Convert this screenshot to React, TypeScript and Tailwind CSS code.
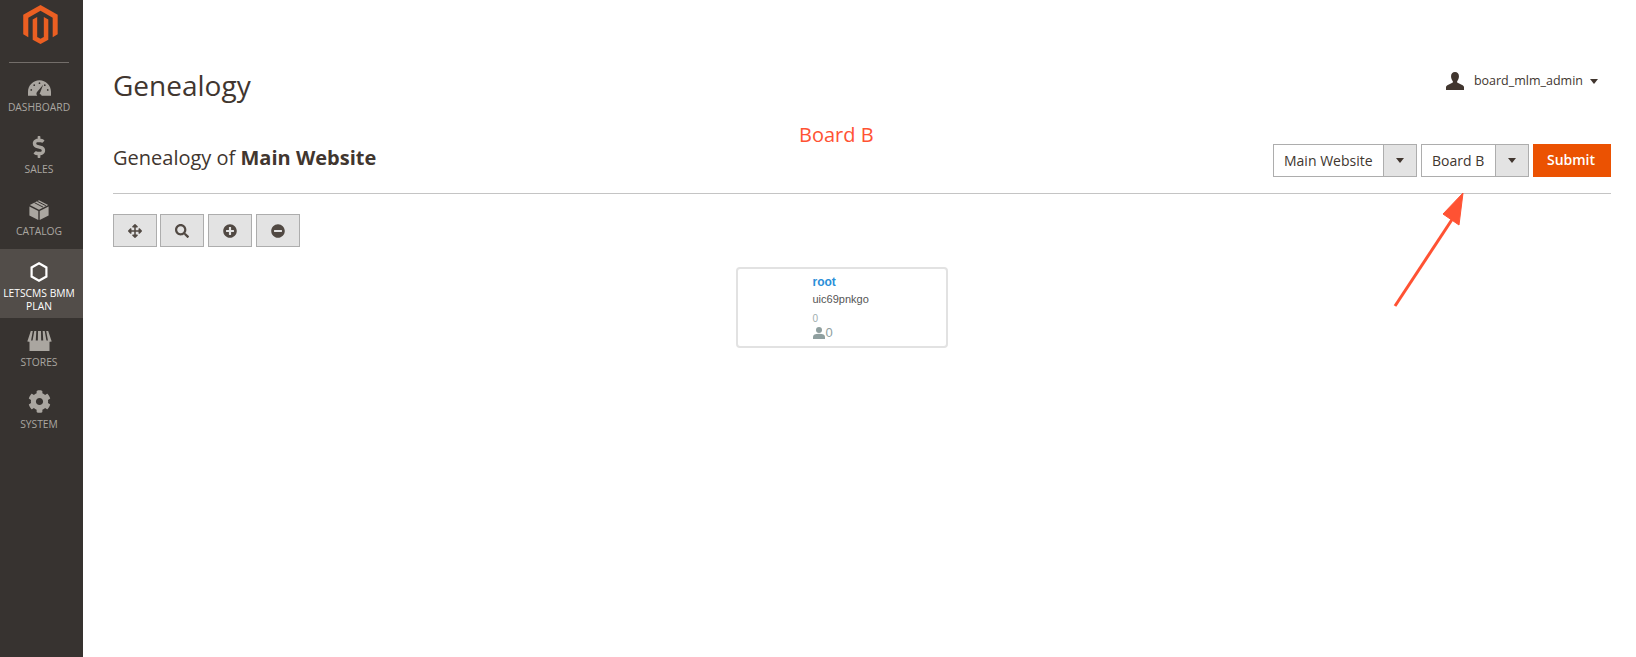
import { ReactNode } from "react";
import { FaArrowsAlt, FaCog, FaDollarSign, FaMinusCircle, FaPlusCircle, FaSearch } from "react-icons/fa";

const Logo = () => (
  <svg viewBox="0 0 35.4 40" className="w-[35px] h-[40px] ml-[2px]">
    <path
      fill="#eb5f22"
      d="M17.700 0 35.300 10V30L30.200 33V13L17.700 5.800 5.200 13V33L0 30V10ZM17.700 40 9.700 35.500V14.800L14.300 12.300V32.700L17.700 34.700 21.100 32.700V12.300L25.700 14.800V35.500Z"
    />
  </svg>
);

const DashboardIcon = () => (
  <svg viewBox="0 0 24 16" className="w-[23px] h-[16px]" fill="currentColor">
    <path
      fillRule="evenodd"
      d="M12 0C5.400 0 0 5.400 0 12v4h9.600a3 3 0 0 1-.4-3.600L15.800 4.600l-3.700 9.600a2.400 2.400 0 0 1 2.200 1.800H24v-4C24 5.400 18.600 0 12 0Z"
    />
    <g fill="#373330">
      <circle cx="12" cy="3" r="0.9" />
      <circle cx="6.500" cy="5" r="0.9" />
      <circle cx="3.400" cy="10" r="0.9" />
      <circle cx="20.600" cy="10" r="0.9" />
      <circle cx="17.500" cy="5" r="0.9" />
    </g>
  </svg>
);

const CatalogIcon = () => (
  <svg viewBox="0 0 20 20" className="w-[20px] h-[20px]" fill="currentColor">
    <path d="M10 .3 19.200 5 10 9.700 .8 5Z" />
    <path d="M.4 6.500 9.300 11V20L.4 15.500ZM19.600 6.500V15.500L10.700 20V11Z" />
    <path d="M5.500 2.700 14 7.100M8.300 1.300 16.800 5.700" stroke="#373330" strokeWidth="1" fill="none" />
  </svg>
);

const HexIcon = () => (
  <svg viewBox="0 0 18 20" className="w-[18px] h-[20px]" fill="none" stroke="currentColor" strokeWidth="2.2">
    <path d="M9 1.300 16.400 5.500V14.500L9 18.700 1.600 14.500V5.500Z" />
  </svg>
);

const StoreIcon = () => (
  <svg viewBox="0 0 25 20" className="w-[25px] h-[20px]" fill="currentColor">
    <path d="M2.500 9.500H22.500V20H2.500Z" />
    <path d="M3.800 0 5.800 0 3.800 11 .3 10.500ZM7.300 0 9.300 0 8.700 11 5.300 11ZM11 0 14 0 14.200 11 10.800 11ZM15.700 0 17.700 0 19.700 11 16.300 11ZM19.200 0 21.200 0 24.700 10.500 21.200 11Z" />
  </svg>
);

const UserIcon = () => (
  <svg viewBox="0 0 20 20" className="w-[20px] h-[18px]" fill="#41362f">
    <path d="M10 0C7.200 0 5.600 2 5.600 4.800c0 2.200.9 4.200 2 5.400v1.600L1.500 14.600C.5 15.100 0 16 0 17v3h20v-3c0-1-.5-1.900-1.500-2.400l-6.100-2.800v-1.600c1.100-1.200 2-3.200 2-5.400C14.400 2 12.800 0 10 0Z" />
  </svg>
);

const CardUserIcon = () => (
  <svg viewBox="0 0 12 12" className="w-[12px] h-[12px] mr-px" fill="currentColor">
    <circle cx="6" cy="3" r="3" />
    <path d="M0 12V10C0 7.800 2 6.800 6 6.800S12 7.800 12 10V12Z" />
  </svg>
);

const Caret = () => <span className="w-0 h-0 border-x-[4.5px] border-x-transparent border-t-[5px] border-t-[#41362f]" />;

type NavItem = { label: ReactNode; icon: ReactNode; active?: boolean };

const navItems: NavItem[] = [
  { label: "DASHBOARD", icon: <DashboardIcon /> },
  { label: "SALES", icon: <FaDollarSign className="w-[22px] h-[22px]" /> },
  { label: "CATALOG", icon: <CatalogIcon /> },
  {
    label: (
      <>
        LETSCMS BMM
        <br />
        PLAN
      </>
    ),
    icon: <HexIcon />,
    active: true,
  },
  { label: "STORES", icon: <StoreIcon /> },
  { label: "SYSTEM", icon: <FaCog className="w-[23px] h-[23px]" /> },
];

const Sidebar = () => (
  <aside className="w-[83px] shrink-0 min-h-[657px] bg-[#373330] flex flex-col items-stretch">
    <div className="h-[63px] shrink-0 flex flex-col items-center pt-[5px] pr-[5px]">
      <Logo />
      <div className="w-[60px] h-px bg-[#736e6a] mt-[18px]" />
    </div>
    {navItems.map((item, i) => (
      <div
        key={i}
        className={
          item.active
            ? "h-[69px] pr-[5px] bg-[#524d49] text-white flex flex-col items-center"
            : "h-[62px] pr-[5px] text-[#aaa6a0] flex flex-col items-center"
        }
      >
        <div className="h-[36px] w-full shrink-0 flex items-end justify-center pb-[3px]">{item.icon}</div>
        <div className="text-[10.3px] leading-[13px] text-center mt-[2px] whitespace-nowrap">{item.label}</div>
      </div>
    ))}
  </aside>
);

const SelectBox = ({ label, width }: { label: string; width: string }) => (
  <div className={`${width} h-[33px] flex border border-[#adadad] bg-white`}>
    <div className="flex-1 flex items-center pl-[10px] text-[14px] text-[#41362f] whitespace-nowrap">{label}</div>
    <div className="w-[33px] bg-[#e3e3e3] border-l border-[#adadad] flex items-center justify-center">
      <Caret />
    </div>
  </div>
);

const ToolButton = ({ children }: { children: ReactNode }) => (
  <button className="w-[44px] h-[33px] bg-[#e3e3e3] border border-[#adadad] flex items-center justify-center text-[#514943]">
    {children}
  </button>
);

export default function App() {
  return (
    <div className="flex min-h-[657px] bg-white font-['Open_Sans',sans-serif] text-[#41362f] overflow-hidden">
      <Sidebar />
      <main className="flex-1 relative pl-[30px] pr-[25px]">
        <header className="h-[120px] flex items-start justify-between pt-[64px]">
          <h1 className="text-[28px] leading-[42px] font-normal">Genealogy</h1>
          <div className="flex items-center mt-[6px] mr-[13px] h-[22px]">
            <UserIcon />
            <span className="text-[12.5px] ml-[9px] mt-px text-[#41362f]">board_mlm_admin</span>
            <span className="ml-[7px] flex">
              <Caret />
            </span>
          </div>
        </header>

        <section className="relative h-[74px] border-b border-[#c4c4c4] flex items-start justify-between pt-[24px]">
          <h2 className="text-[20px] leading-[28px] font-normal">
            Genealogy of <strong className="font-bold">Main Website</strong>
          </h2>
          <div className="flex gap-1">
            <SelectBox label="Main Website" width="w-[144px]" />
            <SelectBox label="Board B" width="w-[108px]" />
            <button className="w-[78px] h-[33px] pb-[3px] pr-[2px] bg-[#eb5202] text-white text-[14px] font-semibold">
              Submit
            </button>
          </div>
          <div className="absolute left-[686px] top-[2px] text-[20px] leading-[26px] text-[#ff5233] whitespace-nowrap">
            Board B
          </div>
        </section>

        <div className="flex gap-1 mt-[20px]">
          <ToolButton>
            <FaArrowsAlt className="w-[14px] h-[14px]" />
          </ToolButton>
          <div className="-ml-px">
            <ToolButton>
              <FaSearch className="w-[14px] h-[14px]" />
            </ToolButton>
          </div>
          <ToolButton>
            <FaPlusCircle className="w-[14px] h-[14px]" />
          </ToolButton>
          <ToolButton>
            <FaMinusCircle className="w-[14px] h-[14px]" />
          </ToolButton>
        </div>

        <div className="flex justify-center mt-[20px] pr-[41px]">
          <div className="w-[212px] h-[81px] border-2 border-[#e2e2e2] rounded-[4px] pl-[75px] pt-[5px] font-['Liberation_Sans',sans-serif]">
            <div className="text-[12px] leading-[16px] font-bold text-[#2a8fd8]">root</div>
            <div className="text-[11px] leading-[16px] mt-px text-[#555]">uic69pnkgo</div>
            <div className="text-[10px] leading-[13px] mt-[5px] text-[#a0aeae]">0</div>
            <div className="flex items-center text-[13px] leading-[16px] text-[#8f9f9f]">
              <CardUserIcon />
              <span>0</span>
            </div>
          </div>
        </div>

        <svg className="absolute left-[1300px] top-[190px] w-[90px] h-[120px]" viewBox="0 0 90 120">
          <path d="M12 116 L74 22" stroke="#ff5233" strokeWidth="3" fill="none" />
          <path d="M80 3 L60 24 L76 35 Z" fill="#ff5233" stroke="#ff5233" />
        </svg>
      </main>
    </div>
  );
}
